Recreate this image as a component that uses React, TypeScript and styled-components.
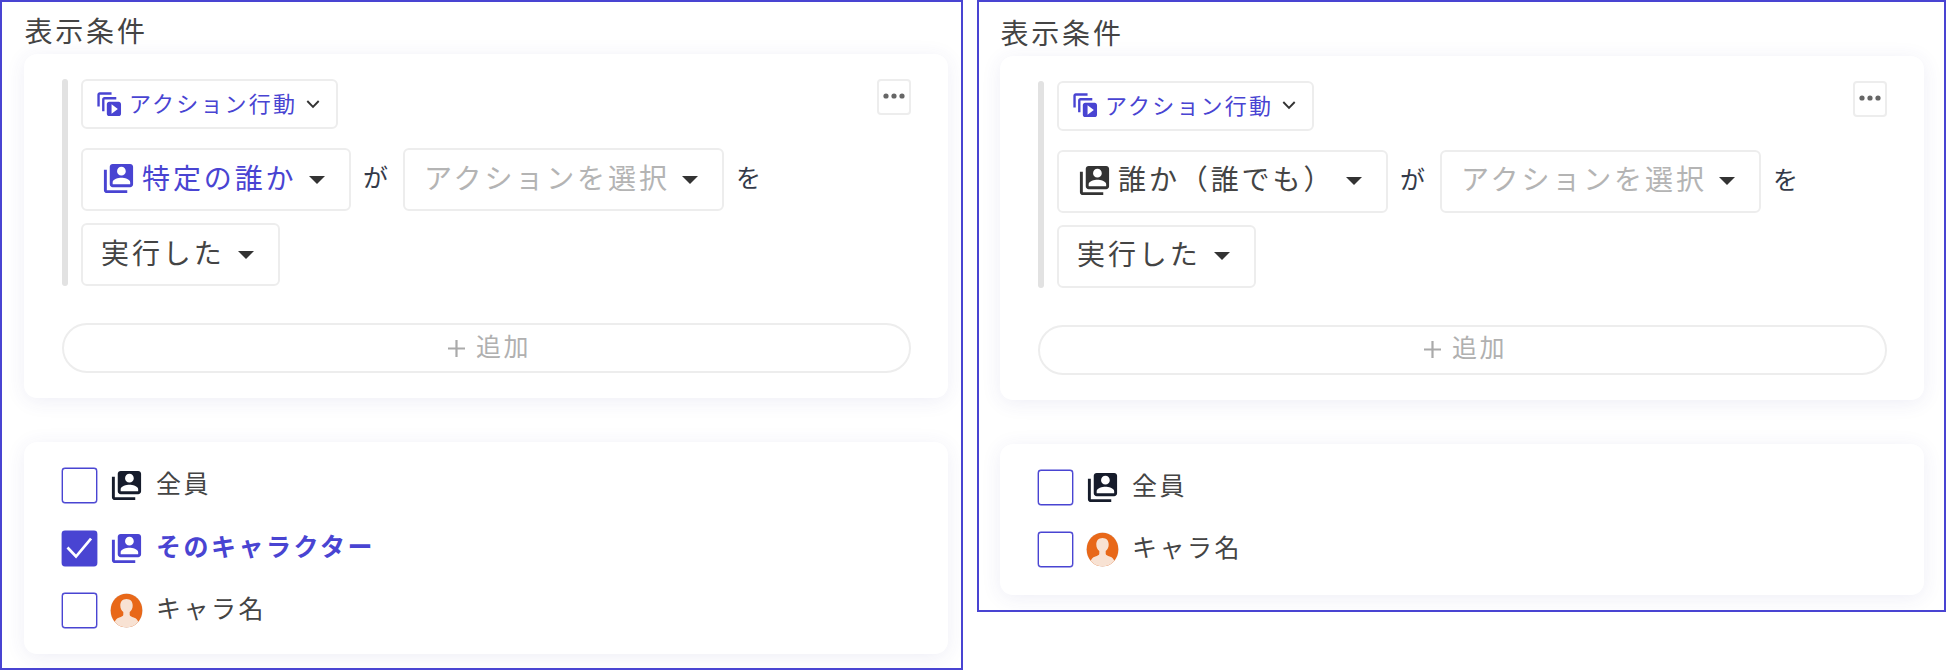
import React from "react";
import styled, { createGlobalStyle } from "styled-components";
import { MdSwitchAccount } from "react-icons/md";

const GlobalStyle = createGlobalStyle`
  * { box-sizing: border-box; }
  body {
    margin: 0;
    background: #fff;
    color: #444;
    font-family: "Noto Sans CJK JP", "Noto Sans", sans-serif;
    font-weight: 400;
  }
  button { font: inherit; color: inherit; background: none; margin: 0; padding: 0; }
  svg { display: block; flex: none; }
`;

const ACCENT = "#4944d2";
const INK = "#444";

const Page = styled.main`
  display: flex;
  align-items: flex-start;
  gap: 14px;
  width: 1946px;
  height: 670px;
  overflow: hidden;
`;

const Panel = styled.section<{ $width: number; $height: number; $pad: string }>`
  width: ${(p) => p.$width}px;
  height: ${(p) => p.$height}px;
  padding: ${(p) => p.$pad};
  border: 2px solid ${ACCENT};
  flex: none;
  overflow: hidden;
`;

const Heading = styled.h2`
  margin: 0;
  height: 44px;
  line-height: 40px;
  font-size: 28px;
  font-weight: inherit;
  letter-spacing: 2.8px;
  padding-left: 0.5px;
`;

const Card = styled.div<{ $height: number }>`
  width: 924px;
  height: ${(p) => p.$height}px;
  border-radius: 13px;
  background: #fff;
  box-shadow: 0 3px 20px rgba(60, 58, 150, 0.085);
`;

const RuleCard = styled(Card)`
  padding: 25px 37px 0 38px;
  margin-bottom: 44px;
`;

const Rule = styled.div`
  display: flex;
  height: 207px;
  margin-bottom: 37px;
`;

const Bar = styled.div`
  width: 6px;
  border-radius: 3px;
  background: #e2e2e2;
  margin-right: 13px;
`;

const RuleBody = styled.div`
  flex: 1;
  display: flex;
  flex-direction: column;
`;

const Line = styled.div`
  display: flex;
  flex: none;
  align-items: center;
  height: 63px;
  margin-bottom: 12px;
`;

const Box = styled.button`
  display: flex;
  flex: none;
  align-items: center;
  border: 2px solid #ededed;
  border-radius: 6px;
  white-space: nowrap;
`;

const TypeSelect = styled(Box)`
  align-self: flex-start;
  width: 257px;
  height: 50px;
  margin-bottom: 19px;
  padding-left: 11.5px;
  font-size: 22px;
  letter-spacing: 2.2px;
  color: ${ACCENT};
`;

const TypeLabel = styled.span`
  margin: 0 9px 4px 6px;
`;

const Select = styled(Box)<{ $tone: "accent" | "plain" | "muted"; $width: number }>`
  width: ${(p) => p.$width}px;
  height: 63px;
  justify-content: space-between;
  padding: 0 24.5px 0 ${(p) => (p.$tone === "muted" ? 19 : 18)}px;
  font-size: 28px;
  letter-spacing: 2.9px;
  color: ${(p) => ({ accent: ACCENT, plain: INK, muted: "#b4b4b4" })[p.$tone]};
`;

const SelectLabel = styled.span`
  display: flex;
  align-items: center;
  gap: 6px;
  line-height: 40px;
  padding-bottom: 6px;
  svg { position: relative; top: 2px; }
`;

const Particle = styled.span<{ $width: number }>`
  width: ${(p) => p.$width}px;
  padding: 0 0 7px 12px;
  font-size: 25px;
  color: #343a49;
`;

const MoreButton = styled(Box)`
  width: 34px;
  height: 36px;
  border-radius: 4px;
  justify-content: center;
  padding-bottom: 2px;
`;

const AddButton = styled(Box)`
  width: 849px;
  height: 50px;
  padding-left: 6px;
  border-radius: 25px;
  justify-content: center;
  gap: 11px;
  font-size: 25px;
  letter-spacing: 2.5px;
  color: #b0b0b0;
  span { margin-bottom: 7px; }
`;

const OptionCard = styled(Card)`
  padding: 26px 38px 0;
`;

const Option = styled.label<{ $selected?: boolean }>`
  display: flex;
  align-items: center;
  height: 35px;
  margin-bottom: 27.5px;
  font-size: 25px;
  letter-spacing: 2.5px;
  font-weight: ${(p) => (p.$selected ? 700 : "inherit")};
  color: ${(p) => (p.$selected ? ACCENT : INK)};
`;

const Check = styled.span<{ $on?: boolean }>`
  width: 35px;
  height: 35px;
  border: 1px solid ${ACCENT};
  box-shadow: 0 0 0 0.4px ${ACCENT};
  border-radius: 3px;
  background: ${(p) => (p.$on ? ACCENT : "#fff")};
  display: flex;
  align-items: center;
  justify-content: center;
  svg { margin: 0 1px 1px 0; }
`;

const OptionIcon = styled.span`
  width: 35px;
  margin: 0 12px 0 12px;
  display: flex;
  justify-content: center;
`;

const OptionText = styled.span`
  line-height: 36px;
  padding-bottom: 7px;
`;

const MotionPlayIcon = () => (
  <svg width="28.4" height="28.4" viewBox="0 0 24 24" fill={ACCENT}>
    <path d="M14 2H4c-1.1 0-2 .9-2 2v10h2V4h10V2z" />
    <path d="M18 6H8c-1.1 0-2 .9-2 2v10h2V8h10V6z" />
    <path
      fillRule="evenodd"
      d="M20 10h-8c-1.1 0-2 .9-2 2v8c0 1.1.9 2 2 2h8c1.1 0 2-.9 2-2v-8c0-1.1-.9-2-2-2zM14 12v8l5.3-4z"
    />
  </svg>
);

const Chevron = () => (
  <svg width="14" height="9" viewBox="0 0 14 9" fill="none" stroke="#333" strokeWidth="1.9">
    <path d="M1.300 1 7 6.800l5.700-5.800" />
  </svg>
);

const Caret = () => (
  <svg width="16" height="8" viewBox="0 0 16 8" fill="#333">
    <path d="M0 0h16L8 8z" />
  </svg>
);

const Dots = () => (
  <svg width="22" height="6" viewBox="0 0 22 6" fill="#666">
    <circle cx="3" cy="3" r="2.6" />
    <circle cx="11" cy="3" r="2.6" />
    <circle cx="19" cy="3" r="2.6" />
  </svg>
);

const Plus = () => (
  <svg width="17" height="17" viewBox="0 0 17 17" stroke="#aaa" strokeWidth="2.2">
    <path d="M8.5 0v17M0 8.5h17" />
  </svg>
);

const Tick = () => (
  <svg width="26" height="22" viewBox="0 0 26 22" fill="none" stroke="#fff" strokeWidth="2.7">
    <path d="M1.5 10.5 10 19.5 25 1.5" />
  </svg>
);

const Avatar = () => (
  <svg width="33" height="35" viewBox="0 0 33 35">
    <defs>
      <clipPath id="face">
        <ellipse cx="16.5" cy="17.5" rx="15.8" ry="16.8" />
      </clipPath>
    </defs>
    <ellipse cx="16.5" cy="17.5" rx="16.1" ry="17.1" fill="#dfe0e4" />
    <g clipPath="url(#face)">
      <rect width="33" height="35" fill="#e86819" />
      <path
        fill="#f8e2d3"
        d="M16.5 6c-4 0-6.3 2.800-6.200 6.500 0 2.600 1.100 5 3 6.600v2.600c0 1.400-1.800 2-4 2.800C6.500 25.500 5 27 4.600 30v5h23.800v-5c-.4-3-1.900-4.500-4.700-5.500-2.200-.8-4-1.400-4-2.800v-2.600c1.900-1.600 3-4 3-6.600C22.800 8.800 20.500 6 16.500 6z"
      />
    </g>
  </svg>
);

type Who = { label: string; tone: "accent" | "plain"; width: number };

const RuleEditor = ({ who }: { who: Who }) => (
  <RuleCard $height={344}>
    <Rule>
      <Bar />
      <RuleBody>
        <TypeSelect>
          <MotionPlayIcon />
          <TypeLabel>アクション行動</TypeLabel>
          <Chevron />
        </TypeSelect>
        <Line>
          <Select $tone={who.tone} $width={who.width}>
            <SelectLabel>
              <MdSwitchAccount size={35} color={who.tone === "accent" ? ACCENT : "#333"} />
              {who.label}
            </SelectLabel>
            <Caret />
          </Select>
          <Particle $width={52}>が</Particle>
          <Select $tone="muted" $width={321}>
            <SelectLabel>アクションを選択</SelectLabel>
            <Caret />
          </Select>
          <Particle $width={50}>を</Particle>
        </Line>
        <Line>
          <Select $tone="plain" $width={199}>
            <SelectLabel>実行した</SelectLabel>
            <Caret />
          </Select>
        </Line>
      </RuleBody>
      <MoreButton aria-label="more">
        <Dots />
      </MoreButton>
    </Rule>
    <AddButton>
      <Plus />
      <span>追加</span>
    </AddButton>
  </RuleCard>
);

const Everyone = () => (
  <Option>
    <Check />
    <OptionIcon>
      <MdSwitchAccount size={35} color="#161c2b" />
    </OptionIcon>
    <OptionText>全員</OptionText>
  </Option>
);

const NamedCharacter = () => (
  <Option>
    <Check />
    <OptionIcon>
      <Avatar />
    </OptionIcon>
    <OptionText>キャラ名</OptionText>
  </Option>
);

export default function App() {
  return (
    <Page>
      <GlobalStyle />
      <Panel $width={963} $height={670} $pad="8px 0 0 22px">
        <Heading>表示条件</Heading>
        <RuleEditor who={{ label: "特定の誰か", tone: "accent", width: 270 }} />
        <OptionCard $height={212}>
          <Everyone />
          <Option $selected>
            <Check $on>
              <Tick />
            </Check>
            <OptionIcon>
              <MdSwitchAccount size={35} />
            </OptionIcon>
            <OptionText>そのキャラクター</OptionText>
          </Option>
          <NamedCharacter />
        </OptionCard>
      </Panel>
      <Panel $width={969} $height={612} $pad="9.500px 0 0 21px">
        <Heading>表示条件</Heading>
        <RuleEditor who={{ label: "誰か（誰でも）", tone: "plain", width: 331 }} />
        <OptionCard $height={151}>
          <Everyone />
          <NamedCharacter />
        </OptionCard>
      </Panel>
    </Page>
  );
}
